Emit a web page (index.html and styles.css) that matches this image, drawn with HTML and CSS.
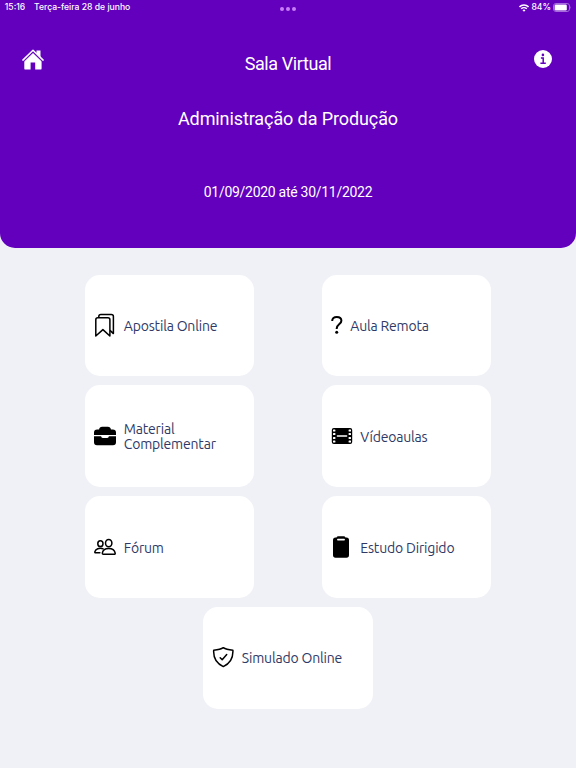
FILE: index.html
```html
<!DOCTYPE html>
<html lang="pt-BR">

<head>
    <meta charset="utf-8">
    <meta name="viewport" content="width=device-width, initial-scale=1.0">
    <title>Sala Virtual</title>
    <link rel="stylesheet" href="styles.css">
</head>

<body>
    <header class="topo">
        <div class="status">
            <div class="status-hora">
                <span class="hora">15:16</span>
                <span class="data">Terça-feira 28 de junho</span>
            </div>
            <div class="pontos"><i></i><i></i><i></i></div>
            <div class="status-bateria">
                <svg class="wifi" width="10" height="8" viewBox="0 0 10 8" fill="none" stroke="#fff" stroke-width="1.5">
                    <path d="M.5 2.9a6.4 6.4 0 0 1 9 0M2.2 4.8a4 4 0 0 1 5.6 0" />
                    <path d="M5 7.8L3.5 6.2a2.1 2.1 0 0 1 3 0z" fill="#fff" stroke="none" />
                </svg>
                <span class="carga">84%</span>
                <svg class="bateria" width="19" height="9" viewBox="0 0 19 9">
                    <rect x=".5" y=".5" width="16" height="8" rx="2.4" fill="none" stroke="#a66bdc" />
                    <rect x="1.6" y="1.5" width="12.2" height="6" rx="1.3" fill="#fff" />
                    <path d="M17.5 3q1.3 1.5 0 3z" fill="#a66bdc" />
                </svg>
            </div>
        </div>

        <nav class="menu">
            <svg class="casa" width="22" height="22" viewBox="0 0 22 22" fill="#fff">
                <path d="M11 3.8L2.3 12v7.4q0 1.2 1.2 1.2h5.1v-7.1h4.6v7.1h5.2q1.2 0 1.2-1.2V12z" />
                <path d="M1.8 12.5L11 3.5l9.2 9" fill="none" stroke="#6200bd" stroke-width=".7" />
                <path d="M14.5 1.6h4v6.8l-4-3.9z" />
                <path d="M.9 11.1L11 1.3l10.1 9.8" fill="none" stroke="#fff" stroke-width="1.5" stroke-linecap="round" stroke-linejoin="round" />
            </svg>
            <h1>Sala Virtual</h1>
            <svg class="info" width="18" height="18" viewBox="0 0 18 18">
                <circle cx="9" cy="9" r="9" fill="#fff" />
                <circle cx="8.9" cy="4.9" r="1.3" fill="#6200bd" />
                <path d="M6.9 8h2.3v5.2M6.4 13.3h5.4" fill="none" stroke="#6200bd" stroke-width="1.5" />
            </svg>
        </nav>

        <h2>Administração da Produção</h2>
        <p class="periodo">01/09/2020 até 30/11/2022</p>
    </header>

    <main class="opcoes">
        <a class="card">
            <svg width="22" height="24" viewBox="0 0 22 24" fill="none" stroke="#000" stroke-width="1.5" stroke-linejoin="round">
                <path d="M1.8 6.8q0-2 2-2h10.1q2 0 2 2V23l-7-6.4-7.1 6.4z" />
                <path d="M4.8 4.6V3.5q0-2.1 2.1-2.1h10.4q2.1 0 2.1 2.1V20.6l-3.4-3.2" />
            </svg>
            <span class="texto">Apostila Online</span>
        </a>
        <a class="card">
            <svg width="12" height="20" viewBox="0 0 12 20">
                <path d="M1.2 6C1.1 3.2 3 1.9 5.8 1.9c2.9 0 4.6 1.6 4.6 3.8 0 3.6-4.7 3.7-4.7 7.7v.5" fill="none" stroke="#000" stroke-width="2" />
                <circle cx="5.7" cy="17.2" r="1.5" />
            </svg>
            <span class="texto">Aula Remota</span>
        </a>
        <a class="card">
            <svg width="22" height="20" viewBox="0 0 22 20">
                <path d="M0 9V6.6q0-3.1 3.2-3.2h1.9Q5.4.7 8.2.7h5.6q2.8 0 3.1 2.7h1.9Q22 3.5 22 6.6V9z" />
                <path d="M0 10.2h7.1q.2 1.8 1.7 1.8h4.4q1.5 0 1.7-1.8H22v6q0 3-3 3H3q-3 0-3-3z" />
            </svg>
            <span class="texto">Material<br>Complementar</span>
        </a>
        <a class="card">
            <svg width="22" height="18" viewBox="0 0 22 18">
                <rect x=".8" y="1" width="20.4" height="16" rx="2" />
                <g fill="#fff">
                    <rect x="2" y="2.4" width="2.4" height="2" rx=".5" />
                    <rect x="2" y="6.1" width="2.4" height="2" rx=".5" />
                    <rect x="2" y="9.9" width="2.4" height="2" rx=".5" />
                    <rect x="2" y="13.6" width="2.4" height="2" rx=".5" />
                    <rect x="17.6" y="2.4" width="2.4" height="2" rx=".5" />
                    <rect x="17.6" y="6.1" width="2.4" height="2" rx=".5" />
                    <rect x="17.6" y="9.9" width="2.4" height="2" rx=".5" />
                    <rect x="17.6" y="13.6" width="2.4" height="2" rx=".5" />
                    <rect x="5.7" y="8.3" width="10.6" height="1.4" rx=".6" />
                </g>
            </svg>
            <span class="texto">Vídeoaulas</span>
        </a>
        <a class="card">
            <svg width="22" height="18" viewBox="0 0 22 18" fill="none" stroke="#000" stroke-width="1.5" stroke-linecap="round" stroke-linejoin="round">
                <ellipse cx="14.7" cy="5.1" rx="3.2" ry="3.7" />
                <path d="M8.3 15.2c.5-3.1 3.1-4.6 6.4-4.6s5.9 1.5 6.5 4.6q.1 1-.9 1h-11q-1 0-1-1z" />
                <ellipse cx="6.4" cy="5.7" rx="2.6" ry="2.9" />
                <path d="M9 10.8c-3.8-1.2-7.5.2-8.2 3.1q-.1.9.7.9h4.4" />
            </svg>
            <span class="texto">Fórum</span>
        </a>
        <a class="card">
            <svg width="22" height="22" viewBox="0 0 22 22">
                <path d="M4.5 1.6h1Q5.9.2 7.4.2h5.2q1.5 0 1.9 1.4h1q2.5 0 2.5 2.5v15q0 2.6-2.5 2.6h-11Q2 21.7 2 19.1v-15q0-2.5 2.5-2.5z" />
                <rect x="6.1" y="2.7" width="7.8" height="1.7" rx=".7" fill="#fff" />
            </svg>
            <span class="texto">Estudo Dirigido</span>
        </a>
        <a class="card ultimo">
            <svg width="22" height="22" viewBox="0 0 22 22" fill="none" stroke="#000" stroke-width="1.5" stroke-linecap="round" stroke-linejoin="round">
                <path d="M11.3 1.7C8.9 3.4 5.8 3.9 1.7 4.3 1.2 12.2 4.2 17.4 11.3 20.6 18.4 17.4 21.3 12.2 20.9 4.3 16.8 3.9 13.7 3.4 11.3 1.7z" />
                <path d="M8.2 11.7l2 2.1 4.5-5.3" />
            </svg>
            <span class="texto">Simulado Online</span>
        </a>
    </main>
</body>

</html>
```
FILE: styles.css
```css
* {
    box-sizing: border-box;
    margin: 0;
    padding: 0;
}

body {
    background-color: #f0f1f6;
    font-family: Roboto, sans-serif;
}

svg {
    display: block;
    flex: none;
}

.topo {
    height: 248px;
    background-color: #6200bd;
    border-radius: 0 0 15px 15px;
    color: #fff;
    text-align: center;
}

.status {
    display: grid;
    grid-template-columns: 1fr auto 1fr;
    height: 15px;
    padding: 0 4px;
    font-family: Inter, sans-serif;
    font-size: 8.6px;
    font-weight: 500;
    line-height: 15px;
    white-space: nowrap;
}

.status-hora {
    display: flex;
    gap: 8px;
}

.hora {
    width: 22px;
}

.pontos {
    display: flex;
    gap: 1.8px;
    padding-top: 7px;
}

.pontos i {
    width: 4px;
    height: 4px;
    border-radius: 50%;
    background-color: #c87cf5;
}

.status-bateria {
    display: flex;
    align-items: center;
    justify-content: flex-end;
}

.carga {
    margin: 0 2px 0 2px;
}

/* laterais iguais para o titulo ficar no centro */
.menu {
    display: grid;
    grid-template-columns: 1fr auto 1fr;
    padding: 34px 24px 0;
}

.casa {
    margin-left: -2px;
}

.info {
    justify-self: end;
    margin-top: 1px;
}

h1,
h2 {
    font-size: 18px;
    font-weight: 400;
    line-height: 22px;
}

h1 {
    margin-top: 4px;
    letter-spacing: -0.4px;
}

h2 {
    margin-top: 33px;
    letter-spacing: -0.1px;
}

.periodo {
    margin-top: 53px;
    font-size: 14px;
    line-height: 18px;
    letter-spacing: -0.28px;
}

.opcoes {
    display: grid;
    grid-template-columns: 169px 169px;
    grid-auto-rows: 101.6px;
    justify-content: center;
    gap: 9.3px 67.5px;
    padding-top: 26.5px;
}

.card {
    display: flex;
    align-items: center;
    gap: 7.5px;
    padding-left: 9px;
    background-color: #fff;
    border-radius: 15px;
}

.card svg {
    margin-bottom: 1px;
}

.ultimo {
    grid-column: 1 / 3;
    justify-self: center;
    width: 169.4px;
}

.texto {
    padding-top: 2px;
    color: #303966;
    font-family: Ubuntu, "Noto Sans", sans-serif;
    font-size: 14px;
    line-height: 15px;
    letter-spacing: -0.18px;
    white-space: nowrap;
}
```
